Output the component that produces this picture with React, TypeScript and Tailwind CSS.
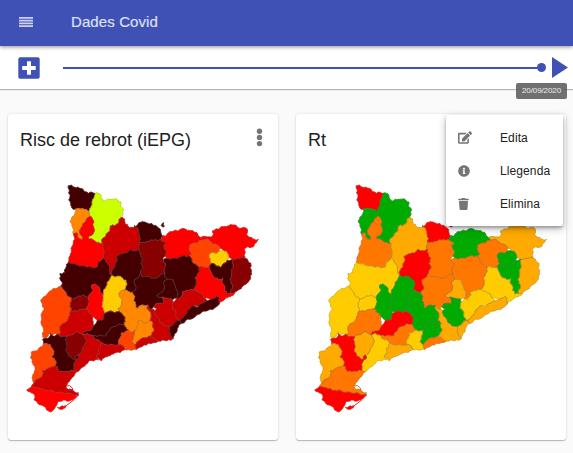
import React from "react";
import { FaEdit, FaInfoCircle, FaTrash } from "react-icons/fa";

type Pt = [number, number];

// Each county: fill in the first map, fill in the second map, outline
const D = "#440000";
const M = "#880000";
const C = "#cc0000";
const R = "#ff0000";
const V = "#ff4400";
const O = "#ff7700";
const P = "#ff8800";
const A = "#ffaa00";
const Y = "#ffcc00";
const G = "#00aa00";
const L = "#ccff00";

const counties: [string, string, string][] = [
  [D, R, "145,17 155,15 165,22 180,25 195,35 205,40 213,36 225,40 222,55 217,72 210,85 206,95 196,88 183,87 165,88 155,83 152,70 146,60 150,50 146,40 147,28"],
  [L, G, "225,40 237,40 243,47 245,57 256,62 270,58 290,57 303,66 300,78 310,90 309,103 300,115 297,125 285,138 270,138 268,155 258,162 248,175 248,190 235,187 220,180 205,175 208,168 220,160 222,145 220,120 210,108 206,95 210,85 217,72 222,55"],
  [P, G, "165,88 183,87 196,88 206,95 210,108 200,115 196,125 188,135 178,150 180,162 188,170 188,178 172,170 170,158 160,162 157,140 151,127 155,115 163,105"],
  [R, O, "210,108 220,120 222,145 220,160 208,168 205,175 220,180 235,187 248,190 250,205 253,215 248,235 235,245 232,260 215,262 190,258 170,255 145,247 152,220 153,205 160,185 163,172 160,162 170,158 172,170 188,178 188,170 180,162 178,150 188,135 196,125 200,115"],
  [C, A, "308,112 315,118 315,130 325,140 340,142 352,137 355,150 358,165 360,188 355,198 358,208 345,212 330,208 318,220 300,222 288,232 290,245 285,260 278,270 275,287 268,280 268,265 262,250 248,235 253,215 250,205 248,190 248,175 258,162 268,155 270,138 285,138 297,125 300,115"],
  [D, R, "342,137 352,137 360,127 375,126 395,130 410,138 418,145 422,155 425,165 432,168 422,180 410,180 390,182 370,187 360,188 358,165 355,150"],
  [D, R, "427,130 431,128 430,134 433,139 427,140 423,136"],
  [R, G, "432,168 440,165 448,155 462,152 480,148 495,147 510,152 525,157 535,167 543,173 548,180 535,187 522,190 510,195 508,208 515,220 508,228 490,227 475,233 460,235 442,235 435,228 440,215 432,205 430,195 438,190 430,185 422,180"],
  [R, A, "543,173 550,169 560,170 575,170 580,160 578,152 595,148 610,140 625,137 640,135 655,143 675,143 683,150 680,165 690,172 700,178 715,178 708,188 700,200 690,203 680,200 673,210 672,225 675,235 655,235 640,238 626,230 622,218 612,214 600,205 592,195 580,192 570,185 558,178 548,180"],
  [V, O, "548,180 558,178 570,185 580,192 592,195 600,205 598,213 590,220 572,220 570,235 575,250 568,262 560,263 548,260 538,262 525,252 515,242 508,228 515,220 508,208 510,195 522,190 535,187"],
  [Y, G, "570,235 572,220 590,220 598,213 612,214 622,218 626,230 622,240 612,250 602,262 590,258 575,250"],
  [D, G, "575,250 590,258 602,262 612,250 622,240 640,238 640,255 635,268 635,285 630,300 638,320 632,340 620,342 612,330 612,315 605,305 608,295 595,298 580,290 572,275 568,262"],
  [M, A, "640,238 655,235 675,235 685,245 693,250 690,262 695,272 695,282 692,295 680,310 668,318 655,330 643,340 632,340 638,320 630,300 635,285 635,268 640,255"],
  [R, Y, "548,260 560,263 568,262 572,275 580,290 595,298 608,295 605,305 612,315 612,330 620,342 632,340 643,340 632,350 615,357 598,372 598,355 590,350 575,358 555,355 545,340 520,328 528,308 525,295 535,278 538,262"],
  [D, O, "430,240 442,235 460,235 475,233 490,227 508,228 515,242 525,252 538,262 535,278 525,295 528,308 520,328 505,332 488,335 490,345 478,358 470,355 470,330 465,315 460,300 440,298 435,280 432,265 438,255"],
  [M, O, "360,188 370,187 390,182 410,180 422,180 430,185 438,190 430,195 432,205 440,215 435,228 430,240 438,255 432,265 435,280 420,285 412,293 400,295 385,290 368,292 362,280 368,265 362,250 368,235 360,222 358,208 355,198"],
  [D, R, "288,232 300,222 318,220 330,208 345,212 358,208 360,222 368,235 362,250 368,265 362,280 355,292 342,300 345,315 348,325 338,338 325,335 315,330 320,315 318,300 305,292 290,290 275,287 278,270 285,260 290,245"],
  [D, A, "440,298 460,300 465,315 470,330 470,355 457,358 440,355 425,352 410,348 420,340 432,328 430,310"],
  [D, O, "368,292 385,290 400,295 412,293 420,285 435,280 440,298 430,310 432,328 420,340 410,348 425,352 430,360 430,372 410,370 402,380 395,388 383,375 365,375 350,385 348,375 340,362 345,350 338,338 348,325 345,315 342,300 355,292 362,280"],
  [D, Y, "145,247 170,255 190,258 215,262 232,260 235,245 248,235 262,250 268,265 268,280 275,287 270,298 262,315 252,328 250,345 245,340 240,325 232,318 225,312 215,315 220,332 210,342 205,355 190,345 170,352 155,357 140,345 122,318 125,305 118,295 120,280 135,278 138,262"],
  [V, Y, "122,318 140,345 155,357 150,368 155,385 152,395 145,415 130,430 120,445 118,468 105,460 95,465 90,455 80,472 68,472 72,455 68,440 65,420 65,400 72,385 62,360 80,345 100,325"],
  [M, Y, "155,357 170,352 190,345 205,355 205,375 200,388 180,388 165,392 152,395 155,385 150,368"],
  [R, G, "215,315 225,312 232,318 240,325 245,340 250,345 250,360 250,385 252,393 255,400 250,418 232,420 218,410 205,395 200,388 205,375 205,355 210,342 220,332"],
  [Y, G, "252,328 262,315 270,298 275,287 290,290 305,292 318,300 320,315 315,330 300,335 298,350 308,360 305,375 295,385 302,398 285,398 265,395 252,393 250,385 250,360 250,345"],
  [P, G, "315,330 325,335 338,338 345,350 340,362 348,375 350,385 365,375 383,375 385,390 393,405 390,422 375,430 360,420 350,440 345,452 325,450 312,432 315,415 302,398 295,385 305,375 308,360 298,350 300,335"],
  [P, G, "345,452 350,440 360,420 375,430 390,422 400,430 402,453 395,465 385,470 365,475 358,480 345,495 335,485 340,468"],
  [D, R, "302,398 315,415 312,432 295,432 280,440 265,455 258,468 235,468 215,465 200,460 190,465 190,458 207,452 218,440 232,420 250,418 255,400 265,395 285,398"],
  [D, O, "215,465 235,468 258,468 265,455 280,440 295,432 312,432 325,450 305,458 300,475 295,495 280,495 262,495 245,488 228,480 220,475"],
  [V, Y, "300,475 305,458 325,450 335,455 345,452 340,468 335,485 345,495 350,508 330,510 315,508 310,498 295,495"],
  [C, A, "242,500 245,488 262,495 280,495 295,495 310,498 315,508 300,518 280,522 262,530 245,542 235,535 228,530 238,520 235,510"],
  [C, Y, "190,465 200,460 215,465 220,475 228,480 245,488 242,500 235,510 238,520 228,530 235,540 225,540 205,545 190,560 172,575 162,572 160,555 165,545 175,535 172,525 185,515 190,500 200,485 195,475"],
  [M, A, "140,470 155,465 170,455 180,460 190,465 195,475 200,485 190,500 185,515 172,525 165,538 150,530 138,515 140,495 135,480"],
  [C, O, "118,468 120,445 130,430 145,415 152,395 165,392 180,388 200,388 205,395 218,410 220,425 218,440 207,452 190,458 190,465 180,460 170,455 155,465 140,470"],
  [D, R, "70,490 68,478 88,472 90,460 100,468 115,463 118,468 140,470 135,480 140,495 138,515 150,530 165,538 172,525 175,535 165,545 160,555 162,572 145,575 118,575 112,560 105,555 108,545 95,530 102,515 92,495 78,490"],
  [V, A, "70,490 78,490 92,495 102,515 95,530 108,545 105,555 85,565 68,572 68,585 60,595 42,612 38,598 42,580 45,565 38,550 32,530 35,515 55,508 65,500"],
  [C, O, "68,572 85,565 105,555 112,560 118,575 145,575 162,572 172,575 160,590 148,605 138,618 145,629 160,632 175,638 175,645 155,643 130,639 110,638 95,630 75,632 60,627 35,620 45,605 60,595 68,585"],
  [R, R, "20,630 35,620 60,627 75,632 95,630 110,638 130,639 155,643 175,645 165,655 150,662 130,660 112,668 108,678 95,695 78,688 70,678 55,672 42,660 45,645 30,635"],
  [R, R, "112,682 125,678 138,678 130,686 118,687"],
  [C, O, "345,495 358,480 365,475 385,470 400,472 415,483 385,490 360,502 350,508"],
  [C, A, "395,388 405,392 410,410 425,430 440,438 450,440 447,455 452,468 460,475 455,480 440,483 415,483 400,472 385,470 395,465 402,453 400,430 390,422 393,405 385,390 383,375"],
  [C, G, "430,360 425,352 440,355 457,358 458,372 455,385 468,400 470,413 475,422 465,428 452,438 440,438 425,430 410,410 405,392 410,385 402,380 410,370 430,372"],
  [C, Y, "458,372 470,355 478,358 490,345 488,335 505,332 520,328 545,340 555,355 560,362 535,378 515,378 505,388 500,400 490,410 480,420 475,422 470,413 468,400 455,385"],
  [D, A, "480,420 490,410 500,400 505,388 515,378 535,380 560,362 575,358 590,350 598,355 598,372 570,388 530,405 510,418 485,430"],
  [D, A, "450,440 465,428 480,420 485,430 472,445 462,468 460,475 452,468 447,455"],
];

const noise = (a: number, b: number) => {
  const s = Math.sin(a * 12.9898 + b * 78.233) * 43758.5453;
  return s - Math.floor(s) - 0.5;
};

// Splits an edge so that both counties sharing it get the same irregular border
const splitEdge = (p: Pt, q: Pt, depth: number): Pt[] => {
  const dx = q[0] - p[0];
  const dy = q[1] - p[1];
  const len = Math.hypot(dx, dy);
  if (depth === 0 || len < 6) return [q];
  const forward = p[0] < q[0] || (p[0] === q[0] && p[1] < q[1]);
  const n = noise(p[0] + q[0], p[1] + q[1]) * (forward ? 1 : -1) * Math.min(6.5, len * 0.45);
  const mid: Pt = [(p[0] + q[0]) / 2 - (dy / len) * n, (p[1] + q[1]) / 2 + (dx / len) * n];
  return [...splitEdge(p, mid, depth - 1), ...splitEdge(mid, q, depth - 1)];
};

const outlines = counties.map(([, , raw]) => {
  const pts = raw.split(" ").map((s) => s.split(",").map(Number) as Pt);
  const out: Pt[] = [];
  pts.forEach((p, i) => out.push(...splitEdge(p, pts[(i + 1) % pts.length], 2)));
  return "M" + out.map((p) => p[0].toFixed(1) + " " + p[1].toFixed(1)).join("L") + "Z";
});

function CountyMap({ series }: { series: 0 | 1 }) {
  return (
    <svg viewBox="0 0 735 720" className="ml-3 block h-[240px] w-[245px] shrink-0" strokeLinejoin="round">
      {outlines.map((d, i) => (
        <path key={"b" + i} d={d} fill={counties[i][series]} stroke={counties[i][series]} strokeWidth={2} />
      ))}
      {outlines.map((d, i) => (
        <path key={i} d={d} fill="none" stroke="#666666" strokeOpacity={0.55} strokeWidth={1.3} />
      ))}
      <path d="M136 679L150 669L163 658L175 646" fill="none" stroke={R} strokeWidth={2.5} />
      <path d="M139 618L149 617L157 624L158 631" fill="none" stroke={series === 0 ? C : "#a85a20"} strokeWidth={2.5} />
    </svg>
  );
}

function MapCard({ title, series, children }: { title: string; series: 0 | 1; children?: React.ReactNode }) {
  return (
    <section className="relative flex h-[326px] w-[270px] shrink-0 flex-col rounded-[3px] bg-white shadow-[0_1px_1px_rgba(0,0,0,0.24),0_0_3px_rgba(0,0,0,0.12)]">
      <header className="flex h-[66px] shrink-0 items-start justify-between pl-3 pr-[15px] pt-[14px]">
        <h2 className="text-[18px] leading-6 text-[#212121]">{title}</h2>
        {!children && (
          <svg viewBox="0 0 7 20" className="-mt-px h-5 w-[7px]" fill="#757575">
            <circle cx="3.5" cy="4.2" r="2.7" />
            <circle cx="3.5" cy="10.4" r="2.7" />
            <circle cx="3.5" cy="16.6" r="2.7" />
          </svg>
        )}
      </header>
      <CountyMap series={series} />
      {children}
    </section>
  );
}

const menuItems = [
  { label: "Edita", icon: <FaEdit className="h-[13px] w-[14px]" /> },
  { label: "Llegenda", icon: <FaInfoCircle className="h-3 w-3" /> },
  { label: "Elimina", icon: <FaTrash className="h-3 w-[11px]" /> },
];

export default function App() {
  return (
    <div className="flex h-[453px] w-[573px] flex-col overflow-hidden bg-[#fafafa] font-['Liberation_Sans',Arial,sans-serif]">
      <header className="z-10 flex h-[46px] shrink-0 items-center bg-[#3f51b5] pl-[19px] pb-[2px] shadow-[0_1px_4px_rgba(0,0,0,0.45)]">
        <svg viewBox="0 0 14 10" className="h-[10px] w-[14px]" fill="#ccd1ec">
          <path d="M0 0h14v1.8H0zM0 2.7h14v1.8H0zM0 5.5h14v1.8H0zM0 8.2h14V10H0z" />
        </svg>
        <h1 className="ml-[38px] text-[15px] leading-5 tracking-[0.1px] text-[#dce0f3] [-webkit-text-stroke:0.2px_#dce0f3]">Dades Covid</h1>
      </header>

      <div className="relative flex h-[43px] shrink-0 items-center bg-white pl-[18px] shadow-[0_1px_1px_rgba(0,0,0,0.28)]">
        <svg viewBox="0 0 22 22" className="h-[22px] w-[22px] shrink-0">
          <rect x="0.3" y="0.3" width="21.4" height="21.4" rx="1.8" fill="#3f51b5" />
          <path d="M9 4.2h4V9h4.7v4H13v4.7H9V13H4.2V9H9z" fill="#fff" />
        </svg>
        <div className="ml-[23px] flex w-[483px] shrink-0 items-center">
          <div className="h-[2px] grow bg-[#3f51b5]" />
          <div className="h-[9px] w-[9px] rounded-full bg-[#3f51b5]" />
        </div>
        <svg viewBox="0 0 17 21" className="ml-[5px] h-[21px] w-[17px] shrink-0" fill="#3f51b5">
          <path d="M1 0L17 10.5L1 21Z" />
        </svg>
        <div className="absolute left-[516px] top-[37px] flex h-4 w-[51px] items-center justify-center rounded-[2px] bg-[#616161]/90 text-[8px] tracking-[-0.1px] text-white/90">
          20/09/2020
        </div>
      </div>

      <main className="flex gap-[18px] pl-2 pt-[25px]">
        <MapCard title="Risc de rebrot (iEPG)" series={0} />
        <MapCard title="Rt" series={1}>
          <ul className="absolute left-[150px] top-[1px] flex h-[111px] w-[117px] flex-col rounded-[2px] bg-white py-[6px] shadow-[0_2px_3px_rgba(0,0,0,0.25),0_3px_8px_rgba(0,0,0,0.25)]">
            {menuItems.map((item) => (
              <li key={item.label} className="flex h-[33px] shrink-0 items-center pl-3 text-[12px] text-[#212121]">
                <span className="flex w-[42px] text-[#757575]">{item.icon}</span>
                <span className="tracking-[0.1px]">{item.label}</span>
              </li>
            ))}
          </ul>
        </MapCard>
      </main>
    </div>
  );
}
